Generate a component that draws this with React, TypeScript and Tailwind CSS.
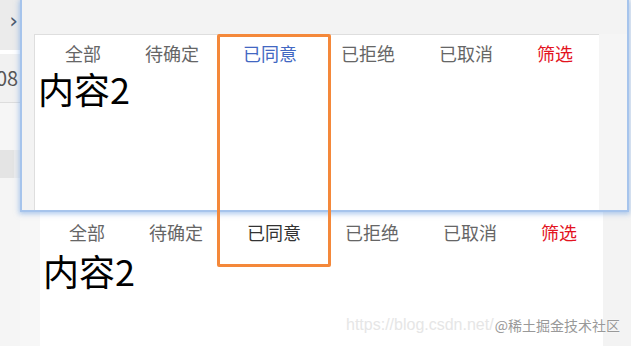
import React from "react";

const tabs = ["全部", "待确定", "已同意", "已拒绝", "已取消", "筛选"];

function TabRow({ variant }: { variant: "top" | "bottom" }) {
  return (
    <div
      className={
        variant === "top"
          ? "flex items-center h-[35px] pl-[30px] gap-[44px]"
          : "flex items-center h-[40px] pl-[29px] gap-[44px]"
      }
    >
      {tabs.map((t) => {
        let color = "text-[#666666]";
        if (t === "筛选") color = "text-[#e3141f]";
        else if (t === "已同意") color = variant === "top" ? "text-[#4267c2]" : "text-[#333333]";
        return (
          <span key={t} className={`text-[18px] leading-[18px] whitespace-nowrap ${color}`}>
            {t}
          </span>
        );
      })}
    </div>
  );
}

export default function App() {
  return (
    <div
      className="relative w-[631px] h-[346px] overflow-hidden bg-[#f4f4f4]"
      style={{ fontFamily: '"Noto Sans CJK SC", "Noto Sans", sans-serif' }}
    >
      {/* underlying screenshot layer */}
      <div className="flex h-full">
        <div className="w-[20px] flex flex-col shrink-0">
          <div className="h-[50px] bg-[#ebebeb] flex items-start justify-end pt-[10px] pr-[2px]">
            <span
              className="text-[22px] leading-[22px] text-[#4b5a6e]"
              style={{ fontFamily: '"DejaVu Sans", sans-serif' }}
            >
              ›
            </span>
          </div>
          <div className="h-[4px] bg-white" />
          <div className="h-[49px] bg-[#f1f1f1] flex items-center overflow-hidden border-b border-[#dddddd]">
            <span className="text-[20px] leading-[20px] text-[#555555] -ml-[4px] whitespace-nowrap">08</span>
          </div>
          <div className="h-[47px] bg-[#f6f6f6]" />
          <div className="h-[28px] bg-[#e4e4e4] border-r-[6px] border-[#ececec]" />
          <div className="flex-1 bg-[#f5f5f5]" />
        </div>
        <div className="flex-1 flex flex-col">
          <div className="h-[212px] shrink-0" />
          <div className="flex flex-1">
            <div className="w-[20px] bg-[#f7f7f7]" />
            <div className="w-[563px] bg-white flex flex-col">
              <TabRow variant="bottom" />
              <div className="pl-[3px] text-[36px] leading-[36px] text-black">内容2</div>
            </div>
            <div className="flex-1 bg-[#f3f3f3]" />
          </div>
        </div>
      </div>

      {/* overlaid window */}
      <div className="absolute left-[20px] top-0 w-[609px] h-[212px] bg-[#f3f3f3] border-r-[2px] border-b-[2px] border-l-[2px] border-[#a6c4ec] shadow-[0_1px_5px_1px_rgba(110,160,225,0.55)] flex flex-col">
        <div className="h-[34px] shrink-0" />
        <div className="flex flex-1">
          <div className="w-[12px] shrink-0" />
          <div className="w-[565px] bg-white border-t border-l border-[#dedede] flex flex-col">
            <TabRow variant="top" />
            <div className="pl-[3px] text-[36px] leading-[36px] text-black">内容2</div>
          </div>
          <div className="flex-1 bg-[#f5f5f5]" />
        </div>
      </div>

      {/* orange annotation box */}
      <div className="absolute left-[217px] top-[34px] w-[114px] h-[233px] border-[3px] border-[#f4883a] rounded-[2px]" />

      {/* watermark */}
      <div className="absolute left-[346px] top-[314px] flex items-center whitespace-nowrap">
        <span
          className="text-[16px] leading-[22px] text-[#e6e6e6]"
          style={{ fontFamily: '"Liberation Sans", sans-serif' }}
        >
          https://blog.csdn.net/
        </span>
        <span className="text-[14px] leading-[22px] text-[#999999] [text-shadow:0_0_2px_#ffffff] ml-[1px]">
          @稀土掘金技术社区
        </span>
      </div>
    </div>
  );
}
